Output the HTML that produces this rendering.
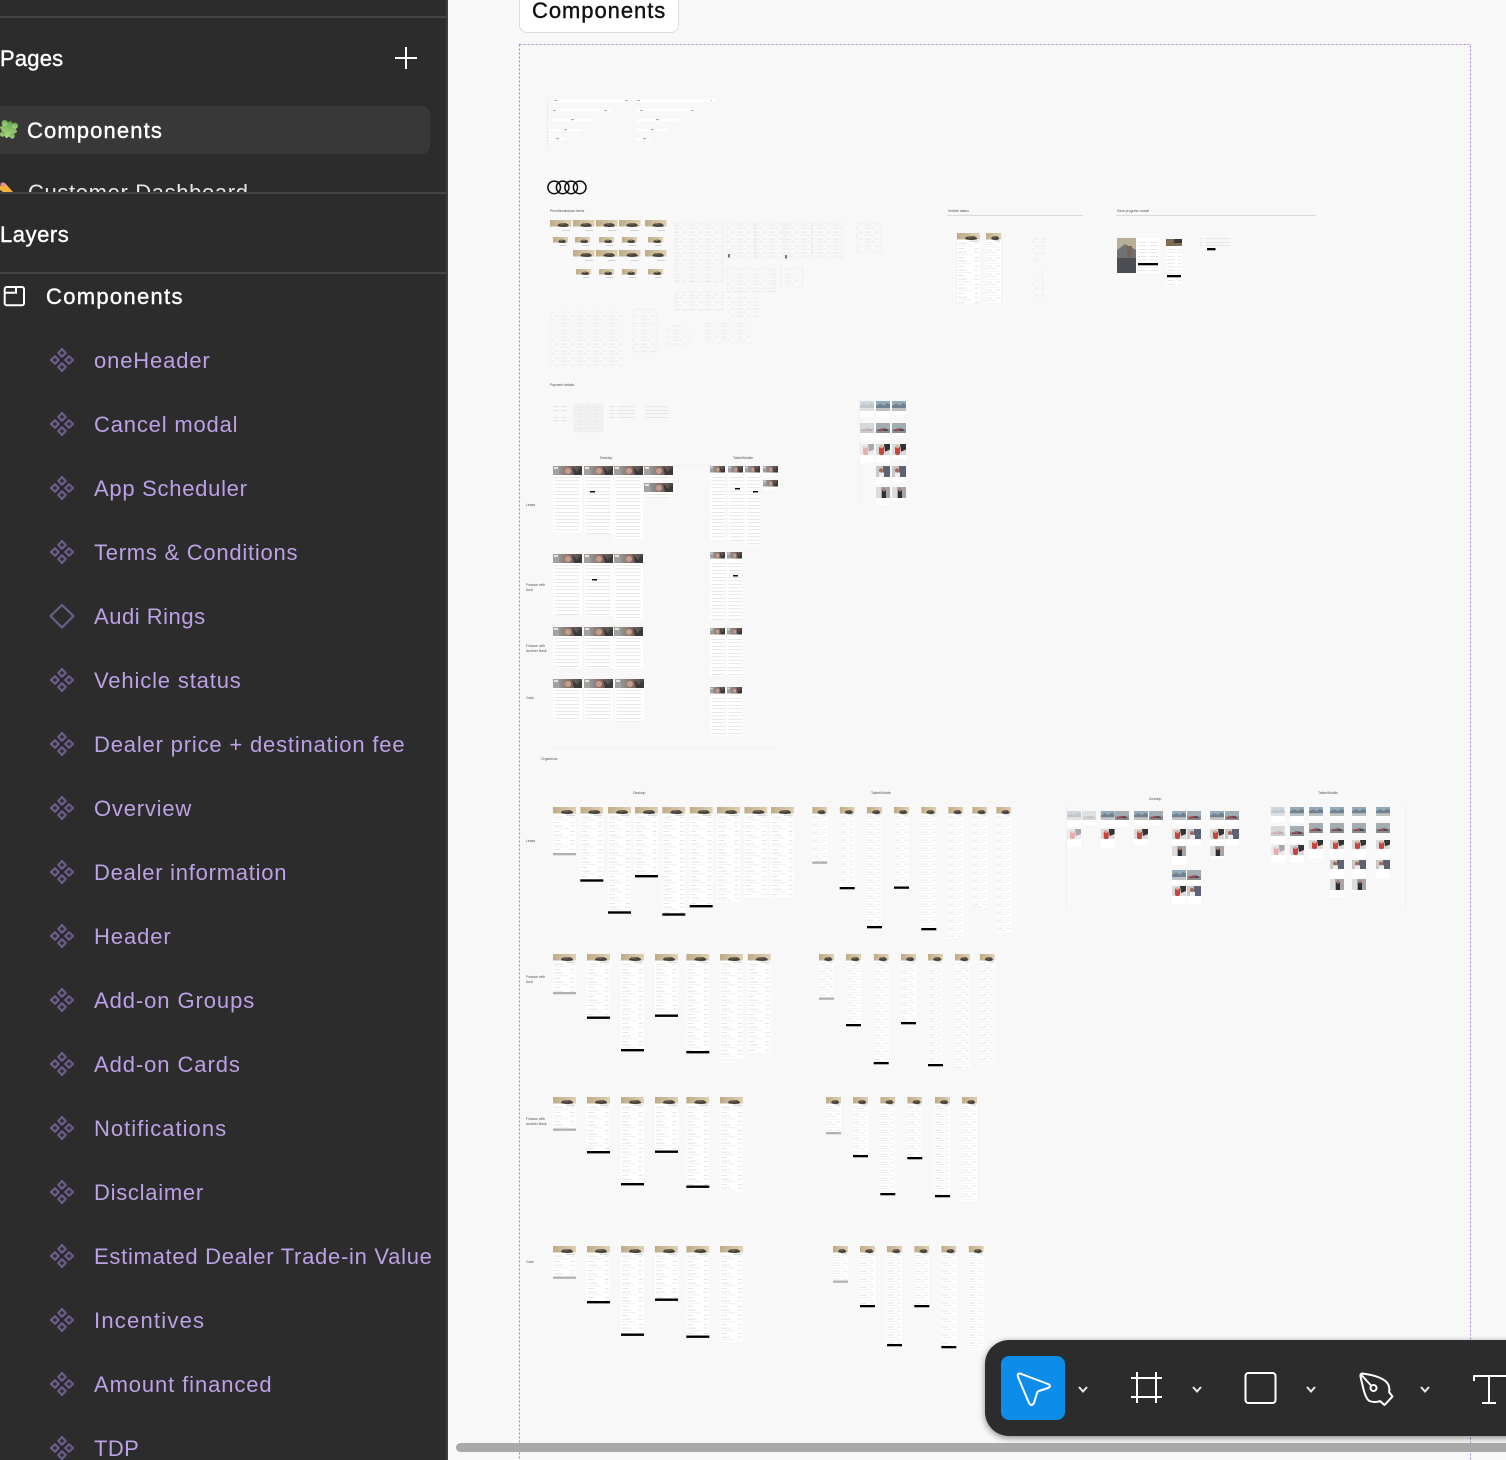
<!DOCTYPE html>
<html><head><meta charset="utf-8"><title>Components</title>
<style>
html,body{margin:0;padding:0;width:1506px;height:1460px;overflow:hidden;background:#f8f8f8;font-family:"Liberation Sans",sans-serif}
#side{position:absolute;left:0;top:0;width:446px;height:1460px;background:#2c2c2c;border-right:2px solid #3e3e3e;overflow:hidden;font-size:22px;color:#fff}
.hr{position:absolute;left:0;width:446px;height:2px;background:#444}
.t{position:absolute;white-space:nowrap;line-height:28px;letter-spacing:.42px}
.m{-webkit-text-stroke:.4px currentColor}
.l{position:absolute;left:94px;white-space:nowrap;line-height:28px;color:#bda1e6;letter-spacing:.82px}
#side svg{position:absolute;left:0;top:0}
#sel{position:absolute;left:-10px;top:106px;width:440px;height:48px;background:#383838;border-radius:8px}
#clip{position:absolute;left:0;top:170px;width:446px;height:22px;overflow:hidden}
#tab{position:absolute;left:519px;top:-10px;width:158px;height:41px;background:#fff;border:1px solid #dcdcdc;border-radius:8px;font-size:22px;color:#111}
#tab span{position:absolute;left:12px;top:6px;line-height:28px;letter-spacing:.95px;-webkit-text-stroke:.4px #111;white-space:nowrap}
#cv{position:absolute;left:0;top:0}
#cv text{font-family:"Liberation Sans",sans-serif;font-size:3.4px;fill:#555}
#bar{position:absolute;left:456px;top:1443px;width:1060px;height:9px;background:#a9a9a9;border-radius:5px}
#tb{position:absolute;left:985px;top:1340px;width:560px;height:96px;background:#2c2c2c;border-radius:24px;box-shadow:0 2px 7px rgba(0,0,0,.45)}
#ov{position:absolute;left:0;top:0}
</style></head><body>
<svg id="cv" width="1506" height="1460" viewBox="0 0 1506 1460">
<defs>
<linearGradient id="tan" x1="0" x2="1" y1="0" y2="0"><stop offset="0" stop-color="#bfab87"/><stop offset="1" stop-color="#dfd0b3"/></linearGradient>
<linearGradient id="phg" x1="0" x2="1" y1="0" y2="0"><stop offset="0" stop-color="#a9a9a7"/><stop offset=".3" stop-color="#8f8c89"/><stop offset=".55" stop-color="#8a6f66"/><stop offset="1" stop-color="#474645"/></linearGradient>
<linearGradient id="mt" x1="0" x2="0" y1="0" y2="1"><stop offset="0" stop-color="#8fa9bd"/><stop offset=".55" stop-color="#a4acb0"/><stop offset="1" stop-color="#c7c9c9"/></linearGradient>
<pattern id="t" patternUnits="userSpaceOnUse" width="23" height="9"><rect x="1" y=".8" width="9" height=".6" fill="#cfcfcf"/><rect x="17" y=".8" width="5" height=".6" fill="#dadada"/><rect x="1" y="3.600" width="14" height=".5" fill="#e2e2e2"/><rect x="1" y="6.400" width="6" height=".6" fill="#d6d6d6"/><rect x="18" y="6.400" width="3.5" height=".6" fill="#cfcfcf"/></pattern>
<pattern id="u" patternUnits="userSpaceOnUse" width="15" height="8"><rect x=".5" y=".8" width="6" height=".6" fill="#cfcfcf"/><rect x="10" y=".8" width="4" height=".6" fill="#dadada"/><rect x=".5" y="3.400" width="10" height=".5" fill="#e0e0e0"/><rect x=".5" y="5.800" width="13" height=".5" fill="#e4e4e4"/></pattern>
<pattern id="s" patternUnits="userSpaceOnUse" width="28" height="3.500"><rect x="1.500" y=".5" width="25" height=".6" fill="#d8d8d8"/></pattern>
<pattern id="dl" patternUnits="userSpaceOnUse" width="16" height="7"><rect x="1" y=".8" width="6" height=".6" fill="#dedede"/><rect x="11" y=".8" width="3.500" height=".6" fill="#e2e2e2"/><rect x="1" y="3.800" width="9" height=".6" fill="#e6e6e6"/></pattern>
<symbol id="car" viewBox="0 0 23 7" preserveAspectRatio="none" overflow="visible"><rect width="23" height="6.500" fill="url(#tan)"/><path d="M8 5.200C10 3.300 11.500 3 14 3C17 3 19 3.800 20 5.100L20 6.200C17 7.200 11 7.200 8.200 6.300Z" fill="#4a443b"/><rect x="11" y="3.400" width="4.500" height="1" fill="#8a8375"/></symbol>
<symbol id="D"><rect width="23" height="240" fill="#fff"/><rect y="9" width="23" height="231" fill="url(#t)"/><use href="#car" width="23" height="7"/><rect x="13" y="7.800" width="9" height=".7" fill="#b5b5b5"/></symbol>
<symbol id="T"><rect width="15" height="240" fill="#fff"/><rect y="9" width="15" height="231" fill="url(#u)"/><use href="#car" width="15" height="7"/><rect x="8" y="7.600" width="6" height=".6" fill="#b5b5b5"/></symbol>
<symbol id="ph" viewBox="0 0 29 9" preserveAspectRatio="none"><rect width="29" height="9" fill="url(#phg)"/><rect x="0" width="6" height="9" fill="#a2a2a0"/><circle cx="15" cy="5" r="3" fill="#c89c8c"/><rect x="1" y="1" width="4" height="2" fill="#e4e4e4"/><path d="M19 0L24 6L26 3L29 2V9H21Z" fill="#3b3a3a"/></symbol>
<symbol id="P"><rect width="29" height="140" fill="#fff"/><rect y="11" width="29" height="129" fill="url(#s)"/><use href="#ph" width="29" height="9"/></symbol>
<symbol id="Q"><rect width="15" height="140" fill="#fff"/><rect y="8" width="15" height="132" fill="url(#s)"/><use href="#ph" width="15" height="6.500"/></symbol>
<symbol id="m" viewBox="0 0 14 10" preserveAspectRatio="none"><rect width="14" height="10" fill="url(#mt)"/><path d="M0 5L4 2.500L8 4.500L11 2L14 3.500V7H0Z" fill="#6f8292"/><rect y="7" width="14" height="3" fill="#bfc2c3"/></symbol>
<symbol id="c" viewBox="0 0 14 10" preserveAspectRatio="none"><rect width="14" height="10" fill="#a3acb2"/><rect y="6" width="14" height="4" fill="#8a8c90"/><path d="M2 7Q7 4 12 6.500V8H2Z" fill="#4b4a52"/><rect x="3" y="6" width="5" height="1.500" fill="#b8494a"/></symbol>
<symbol id="r" viewBox="0 0 14 10" preserveAspectRatio="none"><rect width="14" height="10" fill="#d9dada"/><path d="M8 0H14V5L9 7Z" fill="#333"/><rect x="3" y="2" width="5" height="8" rx="2" fill="#c9423c"/><circle cx="5.500" cy="2.500" r="1.500" fill="#dcae98"/></symbol>
<symbol id="w" viewBox="0 0 14 10" preserveAspectRatio="none"><rect width="14" height="10" fill="#c9c6c6"/><rect x="7" width="7" height="10" fill="#5d6274"/><circle cx="5" cy="4" r="2" fill="#a5685a"/><rect x="3" y="6" width="5" height="4" fill="#eee"/></symbol>
<symbol id="g" viewBox="0 0 14 10" preserveAspectRatio="none"><rect width="14" height="10" fill="#a5a5a5"/><rect width="5" height="10" fill="#dcdcdc"/><rect x="6" y="3" width="4" height="7" fill="#2f2f33"/><circle cx="8" cy="2.600" r="1.500" fill="#a87a68"/></symbol>
</defs>

<rect x="519.500" y="44.500" width="951" height="1430" fill="none" stroke="#a784d2" stroke-dasharray="2 2"/>

<g fill="#fff"><rect x="552" y="99" width="78" height="3"/><rect x="636" y="99" width="80" height="3"/><rect x="552" y="109" width="59" height="2.500"/><rect x="636" y="109" width="60" height="2.500"/><rect x="552" y="119" width="40" height="2.500"/><rect x="636" y="119" width="42" height="2.500"/><rect x="550" y="129" width="32" height="2"/><rect x="636" y="129" width="31" height="2"/><rect x="550" y="138" width="16" height="2"/><rect x="636" y="138" width="15" height="2"/></g>
<g fill="#b0b0b0"><rect x="554" y="100" width="3" height="1"/><rect x="637" y="100" width="3" height="1"/><rect x="625" y="100" width="3" height="1"/><rect x="711" y="100" width="1" height="1"/><rect x="553" y="110" width="3" height="1"/><rect x="640" y="110" width="3" height="1"/><rect x="604" y="110" width="3" height="1"/><rect x="691" y="110" width="3" height="1"/><rect x="571" y="119" width="3" height="1.200"/><rect x="656" y="119" width="3" height="1.200"/><rect x="564" y="129" width="3" height="1.200"/><rect x="651" y="129" width="3" height="1.200"/><rect x="556" y="138" width="3" height="1.200"/><rect x="643" y="138" width="3" height="1.200"/></g>
<line x1="547.500" y1="98" x2="547.500" y2="149" stroke="#e2deef" stroke-dasharray="1.500 1.500"/>

<g fill="none" stroke="#0b0b0b" stroke-width="1.500"><circle cx="554.200" cy="187.400" r="6.300"/><circle cx="562.700" cy="187.400" r="6.300"/><circle cx="571.200" cy="187.400" r="6.300"/><circle cx="579.700" cy="187.400" r="6.300"/></g>

<text x="550" y="212">Price/breakdown items</text>
<text x="948" y="212">Vehicle status</text>
<text x="1117" y="212">Save progress modal</text>
<line x1="947" y1="215.300" x2="1083" y2="215.300" stroke="#d2d2d2" stroke-width=".8"/>
<line x1="1116" y1="215.300" x2="1316" y2="215.300" stroke="#d2d2d2" stroke-width=".8"/>

<!-- price cars -->
<g id="cars">
<use href="#car" x="550" y="220" width="21.500" height="7"/><use href="#car" x="573" y="220" width="21.500" height="7"/><use href="#car" x="596" y="220" width="21.500" height="7"/><use href="#car" x="619" y="220" width="21.500" height="7"/><use href="#car" x="645" y="220" width="21.500" height="7"/>
<use href="#car" x="553" y="237" width="15" height="6"/><use href="#car" x="575" y="237" width="15" height="6"/><use href="#car" x="599" y="237" width="15" height="6"/><use href="#car" x="622" y="237" width="15" height="6"/><use href="#car" x="648" y="237" width="15" height="6"/>
<use href="#car" x="573" y="250" width="21.500" height="7"/><use href="#car" x="596" y="250" width="21.500" height="7"/><use href="#car" x="619" y="250" width="21.500" height="7"/><use href="#car" x="645" y="250" width="21.500" height="7"/>
<use href="#car" x="576" y="269" width="15" height="6"/><use href="#car" x="599" y="269" width="15" height="6"/><use href="#car" x="622" y="269" width="15" height="6"/><use href="#car" x="648" y="269" width="15" height="6"/>
</g>
<g fill="#c4c4c4"><rect x="562" y="230" width="8" height=".7"/><rect x="585" y="230" width="8" height=".7"/><rect x="608" y="230" width="8" height=".7"/><rect x="631" y="230" width="8" height=".7"/><rect x="657" y="230" width="8" height=".7"/><rect x="560" y="245" width="7" height=".7"/><rect x="582" y="245" width="7" height=".7"/><rect x="606" y="245" width="7" height=".7"/><rect x="629" y="245" width="7" height=".7"/><rect x="655" y="245" width="7" height=".7"/><rect x="585" y="260" width="8" height=".7"/><rect x="608" y="260" width="8" height=".7"/><rect x="631" y="260" width="8" height=".7"/><rect x="657" y="260" width="8" height=".7"/><rect x="583" y="277" width="7" height=".7"/><rect x="606" y="277" width="7" height=".7"/><rect x="629" y="277" width="7" height=".7"/><rect x="655" y="277" width="7" height=".7"/></g>

<!-- doc frames -->
<g fill="url(#dl)" stroke="#dfdcf0" stroke-width=".6" stroke-dasharray="1.500 1.500">
<rect x="675" y="223" width="48" height="59"/><rect x="727" y="223" width="28" height="35"/><rect x="755" y="223" width="29" height="35"/><rect x="784" y="223" width="28" height="35"/><rect x="812" y="223" width="30" height="35"/>
<rect x="727" y="268" width="48" height="24"/><rect x="781" y="268" width="22" height="19"/><rect x="857" y="223" width="24" height="29"/><rect x="675" y="292" width="48" height="18"/>
</g>
<rect x="727" y="297" width="31" height="20" fill="url(#dl)"/><rect x="550" y="310" width="73" height="57" fill="url(#dl)"/>
<rect x="633" y="309" width="23" height="43" fill="url(#dl)" stroke="#dfdcf0" stroke-width=".6" stroke-dasharray="1.500 1.500"/>
<rect x="667" y="325" width="23" height="22" fill="url(#dl)"/><rect x="703" y="323" width="50" height="20" fill="url(#dl)"/>
<line x1="703" y1="343" x2="753" y2="343" stroke="#dfdcf0" stroke-width=".6" stroke-dasharray="1.500 1.500"/>
<rect x="728" y="254" width="2" height="3.500" fill="#6b7b8a"/><rect x="785" y="255" width="2" height="3.500" fill="#6b7b8a"/>

<!-- vehicle status -->
<use href="#D" x="957" y="233" width="23" height="70"/><use href="#T" x="986" y="233" width="15.500" height="70"/>
<rect x="1032" y="236" width="13" height="18" fill="url(#dl)"/><rect x="1032" y="258" width="7" height="4" fill="url(#dl)"/><rect x="1032" y="270" width="12" height="30" fill="url(#dl)"/>
<line x1="956.500" y1="233" x2="956.500" y2="303" stroke="#dfdcf0" stroke-width=".6" stroke-dasharray="1.500 1.500"/><line x1="1001.500" y1="233" x2="1001.500" y2="303" stroke="#dfdcf0" stroke-width=".6" stroke-dasharray="1.500 1.500"/>

<!-- save progress -->
<rect x="1117" y="238" width="19" height="35" fill="#6f7277"/><path d="M1117 238H1136V250L1125 244L1117 250Z" fill="#b8af99"/><rect x="1127" y="246" width="5" height="18" fill="#7a6650"/><rect x="1117" y="258" width="19" height="15" fill="#4c4e53"/>
<rect x="1136" y="238" width="24" height="35" fill="#fff"/><rect x="1138" y="241" width="20" height="21" fill="url(#s)"/><rect x="1138" y="263" width="20" height="2.300" fill="#000"/><rect x="1138" y="267" width="20" height="4" fill="url(#s)"/>
<rect x="1166" y="239" width="16" height="7" fill="#7f6d52"/><rect x="1174" y="239" width="8" height="4" fill="#3c3a36"/><rect x="1166" y="246" width="16" height="40" fill="#fff"/><rect x="1167" y="247" width="14" height="27" fill="url(#s)"/><rect x="1167" y="275" width="14" height="2.300" fill="#000"/><rect x="1167" y="278" width="14" height="7" fill="url(#s)"/>
<rect x="1200" y="238" width="32" height="8" fill="url(#s)"/><rect x="1207" y="248" width="8.500" height="2.300" fill="#000"/>

<!-- payment details -->
<text x="550" y="386">Payment details</text>
<rect x="553" y="406" width="14" height="7" fill="url(#s)"/><rect x="553" y="417" width="14" height="5" fill="url(#s)"/>
<rect x="574" y="404" width="29" height="28" fill="#f1f1f1" stroke="#dfdcf0" stroke-width=".5" stroke-dasharray="1.500 1.500"/><rect x="576" y="406" width="25" height="24" fill="url(#dl)"/>
<rect x="609" y="406" width="26" height="14" fill="url(#s)"/><rect x="643" y="406" width="25" height="14" fill="url(#s)"/>

<text x="600" y="459">Desktop</text><text x="733" y="459">Tablet/Mobile</text>
<text x="526" y="506">Lease</text>
<text x="526" y="586">Finance with</text><text x="526" y="591">Audi</text>
<text x="526" y="647">Finance with</text><text x="526" y="652">Another Bank</text>
<text x="526" y="699">Cash</text>
<line x1="672" y1="465.500" x2="710" y2="465.500" stroke="#dfdcf0" stroke-width=".6" stroke-dasharray="1.500 1.500"/>

<use href="#P" x="553" y="466" width="29" height="67"/><use href="#P" x="584" y="466" width="29" height="68"/><use href="#P" x="614" y="466" width="29" height="73"/><use href="#P" x="644" y="466" width="29" height="14"/><use href="#P" x="644" y="483" width="29" height="15"/>
<rect x="590" y="491" width="5" height="1.500" fill="#111"/>
<use href="#P" x="553" y="554" width="29" height="61"/><use href="#P" x="584" y="554" width="29" height="62"/><use href="#P" x="614" y="554" width="29" height="66"/>
<rect x="592" y="579" width="5" height="1.500" fill="#111"/>
<use href="#P" x="553" y="627" width="29" height="41"/><use href="#P" x="584" y="627" width="29" height="41"/><use href="#P" x="614" y="627" width="29" height="42"/>
<use href="#P" x="553" y="679" width="29" height="41"/><use href="#P" x="584" y="679" width="29" height="41"/><use href="#P" x="615" y="679" width="29" height="43"/>
<use href="#Q" x="710" y="466" width="15" height="74"/><use href="#Q" x="728" y="466" width="15" height="75"/><use href="#Q" x="745" y="466" width="15" height="79"/><use href="#Q" x="763" y="466" width="15" height="10"/><use href="#Q" x="763" y="480" width="15" height="10"/>
<rect x="735" y="488" width="5" height="1.500" fill="#111"/><rect x="753" y="491" width="5" height="1.500" fill="#111"/>
<use href="#Q" x="710" y="552" width="15" height="68"/><use href="#Q" x="727" y="552" width="15" height="68"/><rect x="733" y="575" width="5" height="1.500" fill="#111"/>
<use href="#Q" x="710" y="628" width="15" height="48"/><use href="#Q" x="727" y="628" width="15" height="48"/>
<use href="#Q" x="710" y="687" width="15" height="48"/><use href="#Q" x="727" y="687" width="15" height="48"/>
<line x1="552" y1="748.500" x2="780" y2="748.500" stroke="#dfdfea" stroke-width=".6" stroke-dasharray="1.500 1.500"/>

<!-- right payment images -->
<line x1="859.500" y1="400" x2="859.500" y2="505" stroke="#dfdcf0" stroke-width=".6" stroke-dasharray="1.500 1.500"/>
<g fill="#fff">
<rect x="860" y="411" width="14" height="6"/><rect x="876" y="411" width="14" height="6"/><rect x="892" y="411" width="14" height="4"/><rect x="860" y="433" width="14" height="7"/><rect x="876" y="433" width="14" height="7"/><rect x="892" y="433" width="14" height="3"/><rect x="860" y="455" width="14" height="8"/><rect x="876" y="455" width="14" height="8"/><rect x="892" y="455" width="14" height="4"/><rect x="876" y="477" width="14" height="7"/><rect x="892" y="477" width="14" height="5"/><rect x="876" y="498" width="14" height="7"/><rect x="892" y="498" width="14" height="3"/></g>
<use href="#m" x="860" y="401" width="14" height="10" opacity=".4"/><use href="#m" x="876" y="401" width="14" height="10"/><use href="#m" x="892" y="401" width="14" height="10"/>
<use href="#c" x="860" y="423" width="14" height="10" opacity=".4"/><use href="#c" x="876" y="423" width="14" height="10"/><use href="#c" x="892" y="423" width="14" height="10"/>
<use href="#r" x="860" y="444" width="14" height="11" opacity=".4"/><use href="#r" x="876" y="444" width="14" height="11"/><use href="#r" x="892" y="444" width="14" height="11"/>
<use href="#w" x="876" y="466" width="14" height="11"/><use href="#w" x="892" y="466" width="14" height="11"/>
<use href="#g" x="876" y="487" width="14" height="11"/><use href="#g" x="892" y="487" width="14" height="11"/>

<!-- organisms -->
<text x="541" y="760">Organisms</text>
<text x="633" y="794">Desktop</text><text x="871" y="794">Tablet/Mobile</text>
<text x="1149" y="800">Desktop</text><text x="1318" y="794">Tablet/Mobile</text>
<text x="526" y="842">Lease</text>
<text x="526" y="978">Finance with</text><text x="526" y="983">Audi</text>
<text x="526" y="1120">Finance with</text><text x="526" y="1125">Another Bank</text>
<text x="526" y="1263">Cash</text>

<!-- lease desktop -->
<use href="#D" x="553" y="807" width="23" height="48"/><use href="#D" x="580.300" y="807" width="23" height="75"/><use href="#D" x="608" y="807" width="23" height="107"/><use href="#D" x="635" y="807" width="23" height="70"/><use href="#D" x="662.300" y="807" width="23" height="109"/><use href="#D" x="689.700" y="807" width="23" height="100"/><use href="#D" x="717" y="807" width="23" height="95"/><use href="#D" x="744.300" y="807" width="23" height="90"/><use href="#D" x="771" y="807" width="23" height="91"/>
<rect x="553" y="853" width="23" height="2.300" fill="#b1b1b1"/>
<g fill="#000"><rect x="580.300" y="879.300" width="23" height="2.400"/><rect x="608" y="911.300" width="23" height="2.400"/><rect x="635" y="875" width="23" height="2.400"/><rect x="662.300" y="913.300" width="23" height="2.400"/><rect x="689.700" y="905" width="23" height="2.400"/></g>
<!-- lease tablet -->
<use href="#T" x="812.300" y="807" width="15" height="57"/><use href="#T" x="839.700" y="807" width="15" height="82"/><use href="#T" x="867" y="807" width="15" height="121"/><use href="#T" x="894" y="807" width="15" height="82"/><use href="#T" x="921.300" y="807" width="15" height="123"/><use href="#T" x="948.300" y="807" width="15" height="131"/><use href="#T" x="972.300" y="807" width="15" height="100"/><use href="#T" x="996.300" y="807" width="15" height="127"/>
<rect x="812.300" y="861.500" width="15" height="2.300" fill="#b1b1b1"/>
<g fill="#000"><rect x="839.700" y="887" width="15" height="2.300"/><rect x="867" y="926" width="15" height="2.300"/><rect x="894" y="886.500" width="15" height="2.300"/><rect x="921.300" y="928" width="15" height="2.300"/></g>
<!-- finance audi desktop -->
<use href="#D" x="553" y="954" width="23" height="40"/><use href="#D" x="587" y="954" width="23" height="65"/><use href="#D" x="621" y="954" width="23" height="97"/><use href="#D" x="655" y="954" width="23" height="63"/><use href="#D" x="686.300" y="954" width="23" height="99"/><use href="#D" x="720" y="954" width="23" height="104"/><use href="#D" x="747.700" y="954" width="23" height="99"/>
<rect x="553" y="992" width="23" height="2.300" fill="#b1b1b1"/>
<g fill="#000"><rect x="587" y="1016.500" width="23" height="2.400"/><rect x="621" y="1049" width="23" height="2.400"/><rect x="655" y="1014.500" width="23" height="2.400"/><rect x="686.300" y="1051" width="23" height="2.400"/></g>
<!-- finance audi tablet -->
<use href="#T" x="819" y="954" width="15" height="46"/><use href="#T" x="846" y="954" width="15" height="72"/><use href="#T" x="873.700" y="954" width="15" height="110"/><use href="#T" x="901" y="954" width="15" height="70"/><use href="#T" x="928" y="954" width="15" height="112"/><use href="#T" x="955" y="954" width="15" height="114"/><use href="#T" x="979.700" y="954" width="15" height="111"/>
<rect x="819" y="997.500" width="15" height="2.300" fill="#b1b1b1"/>
<g fill="#000"><rect x="846" y="1024" width="15" height="2.300"/><rect x="873.700" y="1062" width="15" height="2.300"/><rect x="901" y="1022" width="15" height="2.300"/><rect x="928" y="1064" width="15" height="2.300"/></g>
<!-- other bank desktop -->
<use href="#D" x="553" y="1097" width="23" height="34"/><use href="#D" x="587" y="1097" width="23" height="56"/><use href="#D" x="621" y="1097" width="23" height="88"/><use href="#D" x="655" y="1097" width="23" height="56"/><use href="#D" x="686.300" y="1097" width="23" height="91"/><use href="#D" x="720" y="1097" width="23" height="95"/>
<rect x="553" y="1128.500" width="23" height="2.300" fill="#b1b1b1"/>
<g fill="#000"><rect x="587" y="1151" width="23" height="2.400"/><rect x="621" y="1183" width="23" height="2.400"/><rect x="655" y="1150.500" width="23" height="2.400"/><rect x="686.300" y="1185.500" width="23" height="2.400"/></g>
<!-- other bank tablet -->
<use href="#T" x="826" y="1097" width="15" height="37"/><use href="#T" x="853" y="1097" width="15" height="60"/><use href="#T" x="880.300" y="1097" width="15" height="98"/><use href="#T" x="907.300" y="1097" width="15" height="62"/><use href="#T" x="935" y="1097" width="15" height="100"/><use href="#T" x="962" y="1097" width="15" height="105"/>
<rect x="826" y="1132" width="15" height="2.300" fill="#b1b1b1"/>
<g fill="#000"><rect x="853" y="1155" width="15" height="2.300"/><rect x="880.300" y="1193" width="15" height="2.300"/><rect x="907.300" y="1157" width="15" height="2.300"/><rect x="935" y="1195" width="15" height="2.300"/></g>
<!-- cash desktop -->
<use href="#D" x="553" y="1246" width="23" height="33"/><use href="#D" x="587" y="1246" width="23" height="57"/><use href="#D" x="621" y="1246" width="23" height="90"/><use href="#D" x="655" y="1246" width="23" height="55"/><use href="#D" x="686.300" y="1246" width="23" height="92"/><use href="#D" x="720" y="1246" width="23" height="96"/>
<rect x="553" y="1276.500" width="23" height="2.300" fill="#b1b1b1"/>
<g fill="#000"><rect x="587" y="1301" width="23" height="2.400"/><rect x="621" y="1333.500" width="23" height="2.400"/><rect x="655" y="1298.500" width="23" height="2.400"/><rect x="686.300" y="1335.500" width="23" height="2.400"/></g>
<!-- cash tablet -->
<use href="#T" x="833" y="1246" width="15" height="37"/><use href="#T" x="860" y="1246" width="15" height="61"/><use href="#T" x="887" y="1246" width="15" height="100"/><use href="#T" x="914.300" y="1246" width="15" height="61"/><use href="#T" x="941.300" y="1246" width="15" height="102"/><use href="#T" x="968.700" y="1246" width="15" height="104"/>
<rect x="833" y="1280.500" width="15" height="2.300" fill="#b1b1b1"/>
<g fill="#000"><rect x="860" y="1305" width="15" height="2.300"/><rect x="887" y="1344" width="15" height="2.300"/><rect x="914.300" y="1305" width="15" height="2.300"/><rect x="941.300" y="1346" width="15" height="2.300"/></g>

<!-- organisms right desktop -->
<line x1="1066.500" y1="806" x2="1066.500" y2="910" stroke="#dfdcf0" stroke-width=".6" stroke-dasharray="1.500 1.500"/>
<line x1="1405.500" y1="806" x2="1405.500" y2="910" stroke="#dfdcf0" stroke-width=".6" stroke-dasharray="1.500 1.500"/>
<g fill="#fff"><rect x="1067" y="820" width="14" height="7"/><rect x="1082" y="820" width="14" height="5"/><rect x="1100.700" y="820" width="14" height="7"/><rect x="1115" y="820" width="14" height="7"/><rect x="1134" y="820" width="14" height="5"/><rect x="1149" y="820" width="14" height="5"/><rect x="1172" y="820" width="14" height="5"/><rect x="1187" y="820" width="14" height="5"/><rect x="1210" y="820" width="14" height="5"/><rect x="1225" y="820" width="14" height="5"/><rect x="1067" y="839" width="14" height="8"/><rect x="1100.700" y="839" width="14" height="9"/><rect x="1134" y="839" width="14" height="6"/><rect x="1172" y="839" width="14" height="6"/><rect x="1187" y="839" width="14" height="6"/><rect x="1210" y="839" width="14" height="6"/><rect x="1225" y="839" width="14" height="6"/><rect x="1172" y="856" width="14" height="9"/><rect x="1210" y="856" width="14" height="3"/><rect x="1172" y="880" width="14" height="4"/><rect x="1187" y="880" width="14" height="4"/><rect x="1172" y="896" width="14" height="8"/><rect x="1187" y="896" width="14" height="8"/></g>
<use href="#m" x="1067" y="811" width="14" height="9" opacity=".4"/><use href="#c" x="1082" y="811" width="14" height="9" opacity=".3"/>
<use href="#m" x="1100.700" y="811" width="14" height="9"/><use href="#c" x="1115" y="811" width="14" height="9"/>
<use href="#m" x="1134" y="811" width="14" height="9"/><use href="#c" x="1149" y="811" width="14" height="9"/>
<use href="#m" x="1172" y="811" width="14" height="9"/><use href="#c" x="1187" y="811" width="14" height="9"/>
<use href="#m" x="1210" y="811" width="14" height="9"/><use href="#c" x="1225" y="811" width="14" height="9"/>
<use href="#r" x="1067" y="829" width="14" height="10" opacity=".4"/><use href="#r" x="1100.700" y="829" width="14" height="10"/><use href="#r" x="1134" y="829" width="14" height="10"/><use href="#r" x="1172" y="829" width="14" height="10"/><use href="#w" x="1187" y="829" width="14" height="10"/><use href="#r" x="1210" y="829" width="14" height="10"/><use href="#w" x="1225" y="829" width="14" height="10"/>
<use href="#g" x="1172" y="846" width="14" height="10"/><use href="#g" x="1210" y="846" width="14" height="10"/>
<use href="#m" x="1172" y="870" width="14" height="10"/><use href="#c" x="1187" y="870" width="14" height="10"/>
<use href="#r" x="1172" y="886" width="14" height="10"/><use href="#w" x="1187" y="886" width="14" height="10"/>
<!-- organisms right tablet -->
<g fill="#fff"><rect x="1270.700" y="816" width="14" height="6"/><rect x="1290" y="816" width="14" height="6"/><rect x="1309" y="816" width="14" height="4"/><rect x="1330" y="816" width="14" height="4"/><rect x="1352" y="816" width="14" height="4"/><rect x="1376" y="816" width="14" height="4"/><rect x="1270.700" y="836" width="14" height="7"/><rect x="1290" y="836" width="14" height="7"/><rect x="1270.700" y="855" width="14" height="8"/><rect x="1290" y="855" width="14" height="8"/><rect x="1309" y="849" width="14" height="9"/><rect x="1330" y="849" width="14" height="9"/><rect x="1352" y="849" width="14" height="9"/><rect x="1376" y="849" width="14" height="9"/><rect x="1330" y="869" width="14" height="9"/><rect x="1352" y="869" width="14" height="9"/><rect x="1376" y="869" width="14" height="9"/><rect x="1330" y="890" width="14" height="7"/><rect x="1352" y="890" width="14" height="3"/></g>
<use href="#m" x="1270.700" y="807" width="14" height="9" opacity=".4"/><use href="#m" x="1290" y="807" width="14" height="9"/><use href="#m" x="1309" y="807" width="14" height="9"/><use href="#m" x="1330" y="807" width="14" height="9"/><use href="#m" x="1352" y="807" width="14" height="9"/><use href="#m" x="1376" y="807" width="14" height="9"/>
<use href="#c" x="1270.700" y="826" width="14" height="10" opacity=".4"/><use href="#c" x="1290" y="826" width="14" height="10"/><use href="#c" x="1309" y="823" width="14" height="10"/><use href="#c" x="1330" y="823" width="14" height="10"/><use href="#c" x="1352" y="823" width="14" height="10"/><use href="#c" x="1376" y="823" width="14" height="10"/>
<use href="#r" x="1270.700" y="845" width="14" height="10" opacity=".4"/><use href="#r" x="1290" y="845" width="14" height="10"/><use href="#r" x="1309" y="840" width="14" height="9"/><use href="#r" x="1330" y="840" width="14" height="9"/><use href="#r" x="1352" y="840" width="14" height="9"/><use href="#r" x="1376" y="840" width="14" height="9"/>
<use href="#w" x="1330" y="860" width="14" height="9"/><use href="#w" x="1352" y="860" width="14" height="9"/><use href="#w" x="1376" y="860" width="14" height="9"/>
<use href="#g" x="1330" y="879" width="14" height="11"/><use href="#g" x="1352" y="879" width="14" height="11"/>
</svg>

<div id="tab"><span>Components</span></div>

<div id="side">
<div class="hr" style="top:16px"></div>
<div class="t m" style="left:0;top:45px;letter-spacing:.2px">Pages</div>
<div id="sel"></div>
<div class="t m" style="left:27px;top:117px;letter-spacing:1.12px">Components</div>
<div id="clip">
<div class="t" style="left:28px;top:9px;color:#e8e8e8;letter-spacing:.64px">Customer Dashboard</div>
<svg width="20" height="22" viewBox="0 170 20 22"><path d="M0 186L5 183L13 192H3L0 190Z" fill="#f2b13c"/><path d="M0 184L3 182L6 185L3 187Z" fill="#e88a9a"/></svg>
</div>
<div class="hr" style="top:192px"></div>
<div class="t m" style="left:0;top:221px;letter-spacing:.55px">Layers</div>
<div class="hr" style="top:272px"></div>
<div class="t m" style="left:46px;top:283px;letter-spacing:1.3px">Components</div>
<div class="l" style="top:347px;letter-spacing:.86px">oneHeader</div>
<div class="l" style="top:411px">Cancel modal</div>
<div class="l" style="top:475px;letter-spacing:.72px">App Scheduler</div>
<div class="l" style="top:539px;letter-spacing:.75px">Terms &amp; Conditions</div>
<div class="l" style="top:603px;letter-spacing:.52px">Audi Rings</div>
<div class="l" style="top:667px;letter-spacing:.85px">Vehicle status</div>
<div class="l" style="top:731px">Dealer price + destination fee</div>
<div class="l" style="top:795px;letter-spacing:.8px">Overview</div>
<div class="l" style="top:859px;letter-spacing:.75px">Dealer information</div>
<div class="l" style="top:923px;letter-spacing:.92px">Header</div>
<div class="l" style="top:987px;letter-spacing:.92px">Add-on Groups</div>
<div class="l" style="top:1051px;letter-spacing:.92px">Add-on Cards</div>
<div class="l" style="top:1115px;letter-spacing:1.02px">Notifications</div>
<div class="l" style="top:1179px;letter-spacing:.72px">Disclaimer</div>
<div class="l" style="top:1243px;letter-spacing:.72px">Estimated Dealer Trade-in Value</div>
<div class="l" style="top:1307px;letter-spacing:1.22px">Incentives</div>
<div class="l" style="top:1371px;letter-spacing:.89px">Amount financed</div>
<div class="l" style="top:1435px;letter-spacing:.42px">TDP</div>
<svg width="446" height="1460" viewBox="0 0 446 1460">
<defs><g id="ci" fill="none" stroke="#6c5d8e" stroke-width="2.200" stroke-linejoin="round"><path d="M0-11L3.700-7L0-3.300L-3.700-7Z"/><path d="M0 11L3.700 7L0 3.300L-3.700 7Z"/><path d="M-11 0L-7-3.700L-3.300 0L-7 3.700Z"/><path d="M11 0L7-3.700L3.300 0L7 3.700Z"/></g>
<linearGradient id="pz" x1="0" x2="1" y1="1" y2="0"><stop offset="0" stop-color="#b4e08c"/><stop offset="1" stop-color="#5f9f45"/></linearGradient></defs>
<path d="M395 58H417M406 47V69" stroke="#fff" stroke-width="2"/>
<g transform="translate(8.500 129.500) rotate(-30)" fill="url(#pz)"><rect x="-6.500" y="-6.500" width="13" height="13" rx="1"/><circle cx="0" cy="-7.500" r="3"/><circle cx="7.500" cy="0" r="3"/><circle cx="-7.500" cy="1" r="2.600"/><circle cx="0" cy="7.500" r="2.600"/></g>
<g fill="none" stroke="#fff" stroke-width="2"><rect x="4.700" y="287" width="19.300" height="18.300" rx="2"/><path d="M5 292.700H16V287"/></g>
<use href="#ci" x="62" y="360"/><use href="#ci" x="62" y="424"/><use href="#ci" x="62" y="488"/><use href="#ci" x="62" y="552"/>
<path d="M62 605L73.500 616L62 627.500L50.500 616Z" fill="none" stroke="#6c5d8e" stroke-width="2.200" stroke-linejoin="round"/>
<use href="#ci" x="62" y="680"/><use href="#ci" x="62" y="744"/><use href="#ci" x="62" y="808"/><use href="#ci" x="62" y="872"/><use href="#ci" x="62" y="936"/><use href="#ci" x="62" y="1000"/><use href="#ci" x="62" y="1064"/><use href="#ci" x="62" y="1128"/><use href="#ci" x="62" y="1192"/><use href="#ci" x="62" y="1256"/><use href="#ci" x="62" y="1320"/><use href="#ci" x="62" y="1384"/><use href="#ci" x="62" y="1448"/>
</svg>
</div>

<div id="bar"></div>
<div id="tb"></div>
<svg id="ov" width="1506" height="1460" viewBox="0 0 1506 1460">
<rect x="1001" y="1356" width="64" height="64" rx="8" fill="#0d8ce9"/>
<path d="M1020 1373.500L1048 1384Q1052 1386 1048 1388L1039 1391Q1037.500 1391.500 1037 1393L1034 1403Q1031.500 1407 1029 1403L1018 1377Q1017 1373 1020 1373.500Z" fill="none" stroke="#fff" stroke-width="2" stroke-linejoin="round"/>
<g fill="none" stroke="#fff" stroke-width="2" stroke-linejoin="round">
<path d="M1131 1378H1162M1131 1397H1162M1137 1372V1403M1156 1372V1403"/>
<rect x="1245.500" y="1373" width="30" height="30" rx="3"/>
<g transform="translate(1.500 0)"><path d="M1361 1373.500C1372 1375 1384 1378 1387 1385C1388 1388 1388 1391 1387.500 1392L1391 1396.500L1383 1405L1378.500 1401C1376 1402 1372 1402.500 1368 1401C1364 1399 1362 1390 1359 1376.500Q1358.500 1373.500 1361 1373.500ZM1360 1375L1369.500 1385.500"/>
<circle cx="1372" cy="1388" r="3"/></g>
<path d="M1474 1381V1376H1506M1489 1376V1403M1482 1403H1496"/>
</g>
<g fill="none" stroke="#e8e8e8" stroke-width="2"><path d="M1079 1387L1083 1391.500L1087 1387"/><path d="M1193 1387L1197 1391.500L1201 1387"/><path d="M1307 1387L1311 1391.500L1315 1387"/><path d="M1421 1387L1425 1391.500L1429 1387"/></g>
</svg>
</body></html>
